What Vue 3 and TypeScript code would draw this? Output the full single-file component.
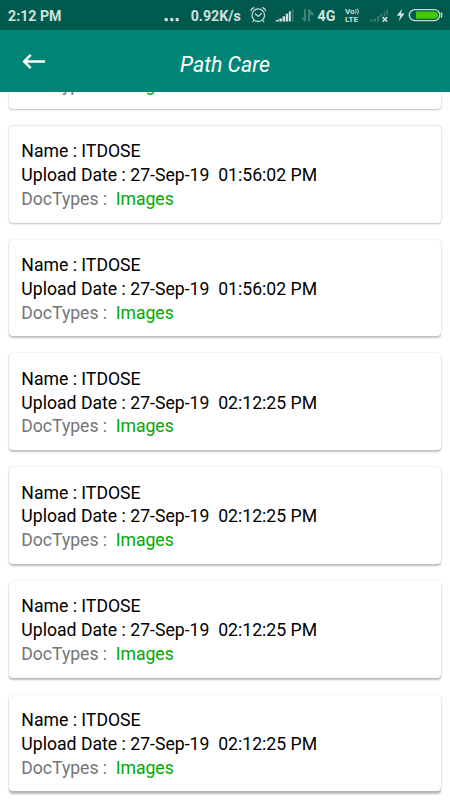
<script setup lang="ts">
interface DocumentCard {
  name: string
  date: string
  time: string
  type: string
}

const times: string[] = [
  '01:56:02 PM',
  '01:56:02 PM',
  '01:56:02 PM',
  '02:12:25 PM',
  '02:12:25 PM',
  '02:12:25 PM',
  '02:12:25 PM',
]

const documents: DocumentCard[] = times.map((time) => ({
  name: 'ITDOSE',
  date: '27-Sep-19',
  time,
  type: 'Images',
}))

// The light sits above the screen, so shadows drop further towards the bottom.
function shadow(index: number): string {
  const drop = (0.5 + index * 0.3).toFixed(2)
  return `0 ${drop}px 2px rgba(0, 0, 0, ${(0.21 + index * 0.01).toFixed(3)}), 0 0 2px rgba(0, 0, 0, 0.13)`
}
</script>

<template>
  <div class="screen">
    <div class="status">
      <span class="clock">2:12 PM</span>
      <svg class="dots" width="16" height="30" viewBox="0 0 16 30">
        <g fill="#d0e1de">
          <rect x="0.6" y="18" width="3.2" height="3.2" rx="0.8" />
          <rect x="6.2" y="18" width="3.2" height="3.2" rx="0.8" />
          <rect x="11.6" y="18" width="3.2" height="3.2" rx="0.8" />
        </g>
      </svg>
      <span class="speed">0.92K/s</span>
      <svg class="icons" width="68" height="30" viewBox="0 0 68 30">
        <g fill="none" stroke="#bfd5d1" stroke-width="1.3" stroke-linecap="round" stroke-linejoin="round">
          <circle cx="10.3" cy="15.2" r="6.3" />
          <path d="M7.3 14 10.3 16.4 13.4 13.5M2.9 10.7Q3.3 8.4 6 7.6M14.6 7.6Q17.2 8.4 17.6 10.7M5.9 20.4 4.9 21.6M14.7 20.4 15.7 21.6" />
        </g>
        <g fill="#d0e1de">
          <path d="M27.5 21.6v-.9l3.2-1.4v2.3zM31.4 18.5h2.5v3.1h-2.5zM34.6 16.2h2.5v5.4h-2.5zM37.8 13.8h2.3v7.8h-2.3zM40.8 11.3h2v10.3h-2z" />
          <path d="M43.8 9.2h1.8v12.4h-1.8z" opacity=".25" />
        </g>
        <path d="M53 17.6 56.6 21.6H58V9.1h-2v8.5zM60 21.6V9.1h1.4l4.1 4.3v1.8H62v6.4z" fill="#d0e1de" opacity=".3" />
      </svg>
      <span class="network">4G</span>
      <span class="volte"><span class="vo">Vo<svg width="5" height="7" viewBox="0 0 5 7"><path d="M.6 1.2Q1.9 3.3.6 5.7M2.6.6Q4.5 3.3 2.6 6.3" fill="none" stroke="#d0e1de" stroke-width="1" /></svg></span><span>LTE</span></span>
      <svg class="power" width="82" height="30" viewBox="0 0 82 30">
        <path d="M1.5 21.6v-.9l3.2-1.4v2.3zM5.6 18.5H8v3.1H5.6zM9 16.2h2.3v5.4H9zM12.2 13.8h2.2v3h-2.2zM15.8 11.3h1.5v5h-1.5zM18.2 9.2h1.6v6h-1.6z" fill="#d0e1de" opacity=".25" />
        <path d="M14.6 17.1 19.2 21.7M19.2 17.1 14.6 21.7" stroke="#d0e1de" stroke-width="1.5" />
        <path d="M34.1 8.7 28.7 15.8h3.6l-1.7 5.6 6-7.8h-3.7z" fill="#d0e1de" />
        <rect x="41.3" y="9.6" width="30.5" height="11" rx="5.5" fill="none" stroke="#c5d9d6" stroke-width="1.4" />
        <path d="M48 11.6h17.8q4.2.4 4.2 3.6t-4.2 3.6H48z" fill="#45c900" />
        <path d="M73.1 12.4q1.8 2.7 0 5.4" fill="none" stroke="#c5d9d6" stroke-width="1.1" />
      </svg>
    </div>

    <header class="bar">
      <svg width="24" height="18" viewBox="0 0 24 18">
        <path d="M23 8.5H2.5M8.7 1.9 2.2 8.5 8.7 15.1" fill="none" stroke="#fff" stroke-width="2.5" />
      </svg>
      <h1>Path Care</h1>
    </header>

    <main class="viewport">
      <div class="list">
        <article v-for="(doc, i) in documents" :key="i" class="card" :style="{ boxShadow: shadow(i) }">
          <template v-if="i > 0">
            <p>Name : {{ doc.name }}</p>
            <p>Upload Date : {{ doc.date }}&nbsp; {{ doc.time }}</p>
          </template>
          <p class="types">DocTypes :&nbsp; <span>{{ doc.type }}</span></p>
        </article>
      </div>
    </main>
  </div>
</template>

<style>
body {
  margin: 0;
  background: #fff;
  overflow: hidden;
}
</style>

<style scoped>
.screen {
  width: 450px;
  height: 800px;
  display: flex;
  flex-direction: column;
  overflow: hidden;
  background: #fff;
  font-family: Roboto, "Liberation Sans", sans-serif;
}

.status {
  display: flex;
  flex: none;
  height: 30px;
  box-sizing: border-box;
  padding-left: 8px;
  background: #00594d;
  color: #d0e1de;
  font-size: 14.2px;
  font-weight: 700;
  line-height: 32px;
  white-space: nowrap;
}

.status svg {
  display: block;
  flex: none;
}

.clock {
  width: 156px;
}

.speed {
  width: 57px;
  margin-left: 11px;
}

.network {
  width: 25px;
  margin-left: 2px;
}

.volte {
  width: 23px;
  margin-left: 2.5px;
  padding-top: 8px;
  font-size: 8px;
  line-height: 7.5px;
  display: flex;
  flex-direction: column;
}

.vo {
  display: flex;
  height: 7.5px;
}

.bar {
  flex: none;
  height: 62px;
  display: grid;
  grid-template-columns: 24px 1fr 24px;
  align-items: center;
  box-sizing: border-box;
  padding: 2px 22px 0;
  background: #008577;
}

.bar h1 {
  margin: 5px 0 0;
  color: #fff;
  font-size: 21.3px;
  font-style: italic;
  font-weight: 400;
  line-height: 28px;
  text-align: center;
}

.viewport {
  flex: 1;
  min-height: 0;
  overflow: hidden;
}

.list {
  display: flex;
  flex-direction: column;
  gap: 17px;
  margin-top: -80px;
  padding: 0 9px;
}

.card {
  display: flex;
  flex-direction: column;
  justify-content: flex-end;
  height: 96.75px;
  flex: none;
  box-sizing: border-box;
  padding: 0 12.3px 10.8px;
  border-radius: 4px;
  background: #fff;
  color: #000;
  font-size: 17.65px;
  line-height: 23.8px;
}

.card p {
  margin: 0;
  white-space: pre;
}

.card .types {
  color: #757575;
  letter-spacing: -0.04px;
}

.types span {
  color: #00aa00;
}
</style>
